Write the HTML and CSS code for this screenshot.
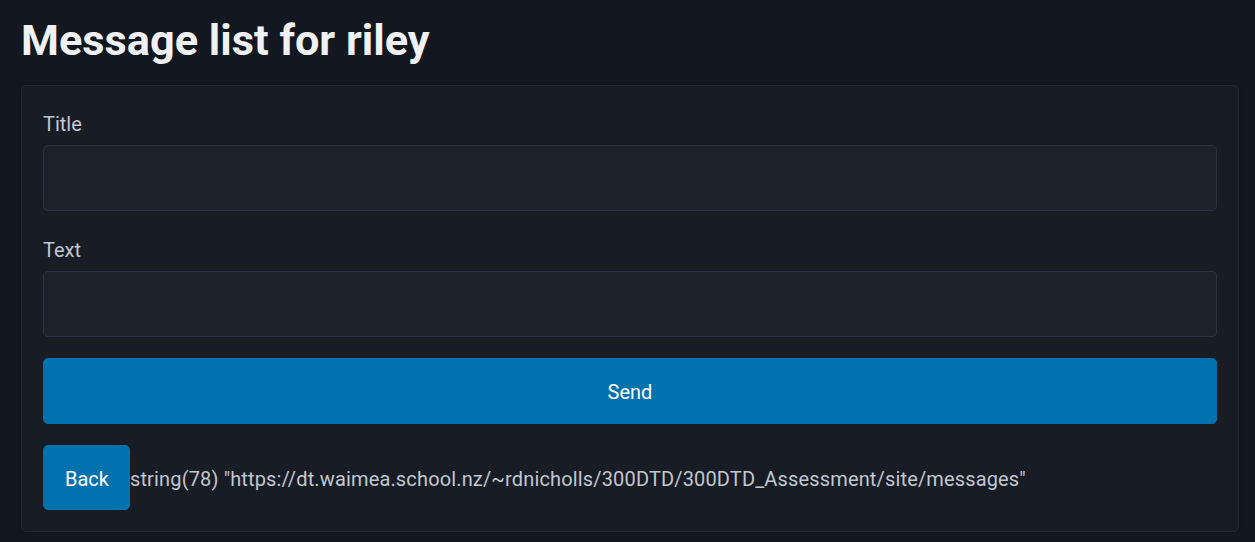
FILE: index.html
```html
<!DOCTYPE html>
<html lang="en">
<head>
<meta charset="utf-8">
<title>Message list for riley</title>
<link rel="stylesheet" href="styles.css">
</head>
<body>
<main class="page">
  <h1 class="title">Message list for riley</h1>
  <article class="card">
    <form class="form">
      <label class="label" for="title">Title</label>
      <input class="field" id="title" type="text">
      <label class="label" for="text">Text</label>
      <input class="field" id="text" type="text">
      <button class="btn btn-wide" type="button">Send</button>
    </form>
    <div class="back-row"><a class="btn btn-back" href="#">Back</a><span class="dump">string(78) "https://dt.waimea.school.nz/~rdnicholls/300DTD/300DTD_Assessment/site/messages"</span></div>
  </article>
</main>
</body>
</html>
```

FILE: styles.css
```css
* { box-sizing: border-box; }
html, body { margin: 0; padding: 0; }
body {
  background: #13171f;
  color: #c2c7d0;
  font-family: Roboto, "Noto Sans", sans-serif;
  font-size: 20px;
  line-height: 1.5;
}
.page {
  padding: 17px 16px 0 21px;
}
.title {
  margin: 0 0 20px 0;
  font-size: 43.3px;
  line-height: 48px;
  font-weight: 700;
  color: #f0f1f3;
}
.card {
  background: #181c25;
  border: 1px solid #222733;
  border-radius: 5px;
  padding: 21px;
  box-shadow: 0 2px 6px rgba(0,0,0,0.15);
}
.form { display: flex; flex-direction: column; }
.label {
  display: block;
  padding-top: 2px;
  margin-bottom: 6px;
  color: #c2c7d0;
}
.field {
  display: block;
  width: 100%;
  height: 66px;
  margin: 0 0 22px 0;
  background: #1c212c;
  border: 1px solid #2a3140;
  border-radius: 5px;
  color: #c2c7d0;
  font: inherit;
  padding: 0 20px;
  outline: none;
}
.field + .btn-wide { margin-top: -1px; }
.btn {
  background: #0172ad;
  color: #fff;
  border: 1px solid #0172ad;
  border-radius: 5px;
  font: inherit;
  text-decoration: none;
  text-align: center;
}
.btn-wide {
  display: block;
  width: 100%;
  height: 66px;
  padding-top: 2px;
  margin-bottom: 21px;
}
.back-row {
  display: flex;
  align-items: center;
  padding-top: 2px;
}
.btn-back {
  display: inline-flex;
  align-items: center;
  justify-content: center;
  height: 65px;
  margin-top: -2px;
  padding: 2px 20px 0 21px;
}
.dump { color: #c2c7d0; white-space: nowrap; letter-spacing: 0.15px; }
```
